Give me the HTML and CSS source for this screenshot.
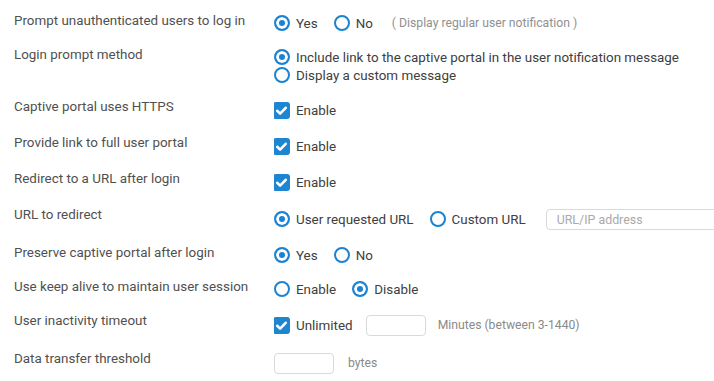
FILE: index.html
```html
<!DOCTYPE html>
<html lang="en">
<head>
    <meta charset="UTF-8">
    <meta name="viewport" content="width=device-width, initial-scale=1.0">
    <title>Captive portal settings</title>
    <link rel="stylesheet" href="styles.css">
</head>
<body>
    <form class="settings">
        <div class="row">
            <div class="label">Prompt unauthenticated users to log in</div>
            <div class="controls">
                <div class="line">
                    <label class="opt"><input type="radio" name="prompt" checked> Yes</label>
                    <label class="opt"><input type="radio" name="prompt"> No</label>
                    <span class="hint">( Display regular user notification )</span>
                </div>
            </div>
        </div>

        <div class="row">
            <div class="label">Login prompt method</div>
            <div class="controls">
                <div class="line">
                    <label class="opt"><input type="radio" name="method" checked> Include link to the captive portal in the user notification message</label>
                </div>
                <div class="line">
                    <label class="opt"><input type="radio" name="method"> Display a custom message</label>
                </div>
            </div>
        </div>

        <div class="row">
            <div class="label">Captive portal uses HTTPS</div>
            <div class="controls">
                <div class="line line-check">
                    <label class="opt"><span class="check"><svg viewBox="0 0 17 17" width="17" height="17"><path d="M4.2 8.8l2.9 2.8 5.6-5.8" fill="none" stroke="#fff" stroke-width="2.6" stroke-linecap="round" stroke-linejoin="round"/></svg></span> Enable</label>
                </div>
            </div>
        </div>

        <div class="row">
            <div class="label">Provide link to full user portal</div>
            <div class="controls">
                <div class="line line-check">
                    <label class="opt"><span class="check"><svg viewBox="0 0 17 17" width="17" height="17"><path d="M4.2 8.8l2.9 2.8 5.6-5.8" fill="none" stroke="#fff" stroke-width="2.6" stroke-linecap="round" stroke-linejoin="round"/></svg></span> Enable</label>
                </div>
            </div>
        </div>

        <div class="row">
            <div class="label">Redirect to a URL after login</div>
            <div class="controls">
                <div class="line line-check">
                    <label class="opt"><span class="check"><svg viewBox="0 0 17 17" width="17" height="17"><path d="M4.2 8.8l2.9 2.8 5.6-5.8" fill="none" stroke="#fff" stroke-width="2.6" stroke-linecap="round" stroke-linejoin="round"/></svg></span> Enable</label>
                </div>
            </div>
        </div>

        <div class="row">
            <div class="label">URL to redirect</div>
            <div class="controls">
                <div class="line line-input">
                    <label class="opt"><input type="radio" name="url" checked> User requested URL</label>
                    <label class="opt"><input type="radio" name="url"> Custom URL</label>
                    <input type="text" class="text url" placeholder="URL/IP address">
                </div>
            </div>
        </div>

        <div class="row">
            <div class="label">Preserve captive portal after login</div>
            <div class="controls">
                <div class="line">
                    <label class="opt"><input type="radio" name="preserve" checked> Yes</label>
                    <label class="opt"><input type="radio" name="preserve"> No</label>
                </div>
            </div>
        </div>

        <div class="row">
            <div class="label">Use keep alive to maintain user session</div>
            <div class="controls">
                <div class="line">
                    <label class="opt"><input type="radio" name="keepalive"> Enable</label>
                    <label class="opt"><input type="radio" name="keepalive" checked> Disable</label>
                </div>
            </div>
        </div>

        <div class="row">
            <div class="label">User inactivity timeout</div>
            <div class="controls">
                <div class="line line-input">
                    <label class="opt opt-tight"><span class="check"><svg viewBox="0 0 17 17" width="17" height="17"><path d="M4.2 8.8l2.9 2.8 5.6-5.8" fill="none" stroke="#fff" stroke-width="2.6" stroke-linecap="round" stroke-linejoin="round"/></svg></span> Unlimited</label>
                    <input type="text" class="text small">
                    <span class="unit">Minutes (between 3-1440)</span>
                </div>
            </div>
        </div>

        <div class="row">
            <div class="label">Data transfer threshold</div>
            <div class="controls">
                <div class="line line-input">
                    <input type="text" class="text small">
                    <span class="unit unit-wide">bytes</span>
                </div>
            </div>
        </div>
    </form>
</body>
</html>
```

FILE: styles.css
```css
body {
    margin: 0;
    padding: 12px 0 0 14px;
    font-family: Roboto, "Noto Sans", sans-serif;
    font-size: 13.4px;
    color: #444;
    background-color: #fff;
    overflow: hidden;
}
.settings {
    display: flex;
    flex-direction: column;
}
.row {
    display: grid;
    grid-template-columns: 260px 1fr;
}
.label {
    line-height: 18px;
    color: #505050;
    white-space: nowrap;
}
.controls {
    padding: 2px 0 14px 0;
    overflow: hidden;
}
.line {
    display: flex;
    align-items: center;
    height: 18px;
    white-space: nowrap;
}
.line-check {
    height: 20px;
}
.line-input {
    height: 22px;
}
.opt {
    display: flex;
    align-items: center;
    gap: 6px;
    margin-right: 16px;
    color: #404040;
}
.opt-tight {
    margin-right: 13px;
}
input[type="radio"] {
    appearance: none;
    -webkit-appearance: none;
    margin: 0;
    width: 16px;
    height: 16px;
    border: 2px solid #1b83d1;
    border-radius: 50%;
    background-color: #fff;
    flex: none;
}
input[type="radio"]:checked {
    background-color: #1b83d1;
    box-shadow: inset 0 0 0 3px #fff;
}
.check {
    display: inline-flex;
    width: 17px;
    height: 17px;
    border-radius: 3px;
    background-color: #1e86d1;
    flex: none;
    margin-left: -1px;
}
.hint {
    margin-left: 3px;
    font-size: 12.2px;
    color: #909090;
}
.text {
    box-sizing: border-box;
    height: 21px;
    border: 1px solid #d9d9d9;
    border-radius: 4px;
    padding: 0 10px;
    font-family: inherit;
    font-size: 12.4px;
    color: #444;
    background-color: #fff;
}
.text::placeholder {
    color: #aaa;
}
.url {
    width: 200px;
    margin-left: 4px;
}
.small {
    width: 60px;
}
.unit {
    margin-left: 12px;
    font-size: 12.2px;
    color: #8a8a8a;
}
.unit-wide {
    margin-left: 14px;
}
```
